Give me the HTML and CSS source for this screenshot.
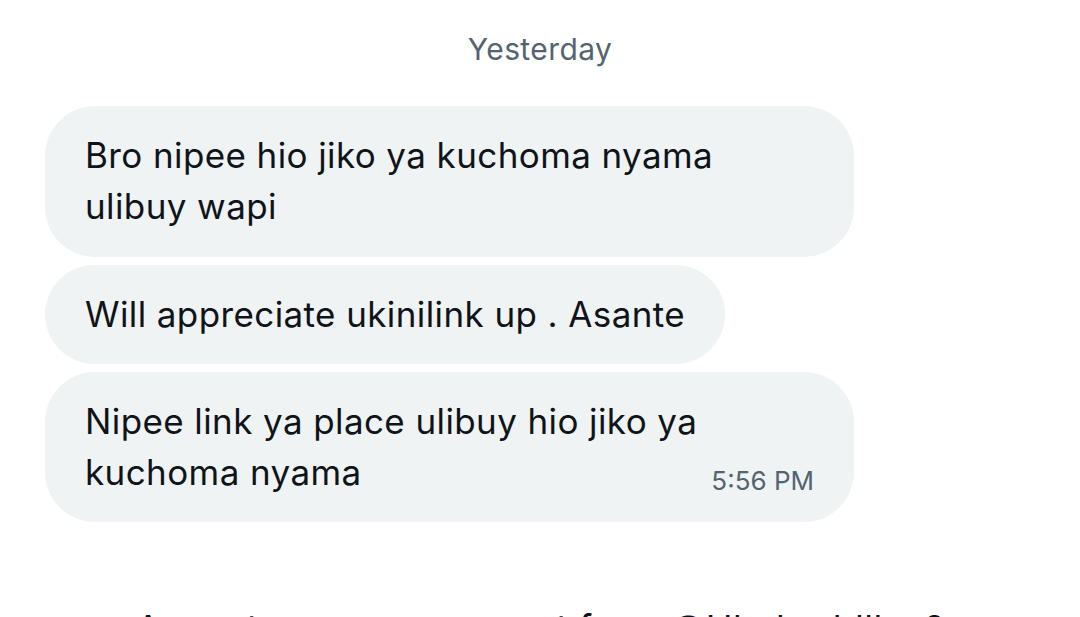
FILE: index.html
```html
<!DOCTYPE html>
<html>
<head>
<meta charset="utf-8">
<link rel="stylesheet" href="styles.css">
</head>
<body>
<div class="chat">
  <div class="day">Yesterday</div>
  <div class="messages">
    <div class="bubble">Bro nipee hio jiko ya kuchoma nyama ulibuy wapi</div>
    <div class="bubble">Will appreciate ukinilink up . Asante</div>
    <div class="bubble last">
      <div class="text">Nipee link ya place ulibuy hio jiko ya kuchoma nyama</div>
      <div class="time">5:56 PM</div>
    </div>
  </div>
  <div class="request">Accept message request from @Uhebaddllee?</div>
</div>
</body>
</html>
```
FILE: styles.css
```css
html, body {
  margin: 0;
  padding: 0;
  background: #ffffff;
}
body {
  width: 1080px;
  height: 617px;
  overflow: hidden;
  font-family: Inter, "Noto Sans", sans-serif;
  color: #0f1419;
}
.chat {
  display: flex;
  flex-direction: column;
}
.day {
  text-align: center;
  color: #536471;
  font-size: 30px;
  line-height: 34px;
  padding-top: 32px;
  height: 40px;
  letter-spacing: 0.4px;
}
.messages {
  display: flex;
  flex-direction: column;
  align-items: flex-start;
  gap: 8px;
  padding-left: 45px;
  margin-top: 34px;
}
.bubble {
  background: #eff3f4;
  border-radius: 50px;
  max-width: 729px;
  padding: 24px 40px;
  font-size: 35px;
  line-height: 51px;
  letter-spacing: 0.4px;
}
.bubble:first-child {
  padding-bottom: 25px;
}
.bubble.last {
  width: 729px;
}
.time {
  text-align: right;
  color: #536471;
  font-size: 26px;
  line-height: 30px;
  letter-spacing: 0;
  margin-top: -32px;
  margin-bottom: 2px;
}
.request {
  text-align: center;
  font-size: 36px;
  line-height: 40px;
  letter-spacing: 0.4px;
  margin-top: 86px;
}
```
